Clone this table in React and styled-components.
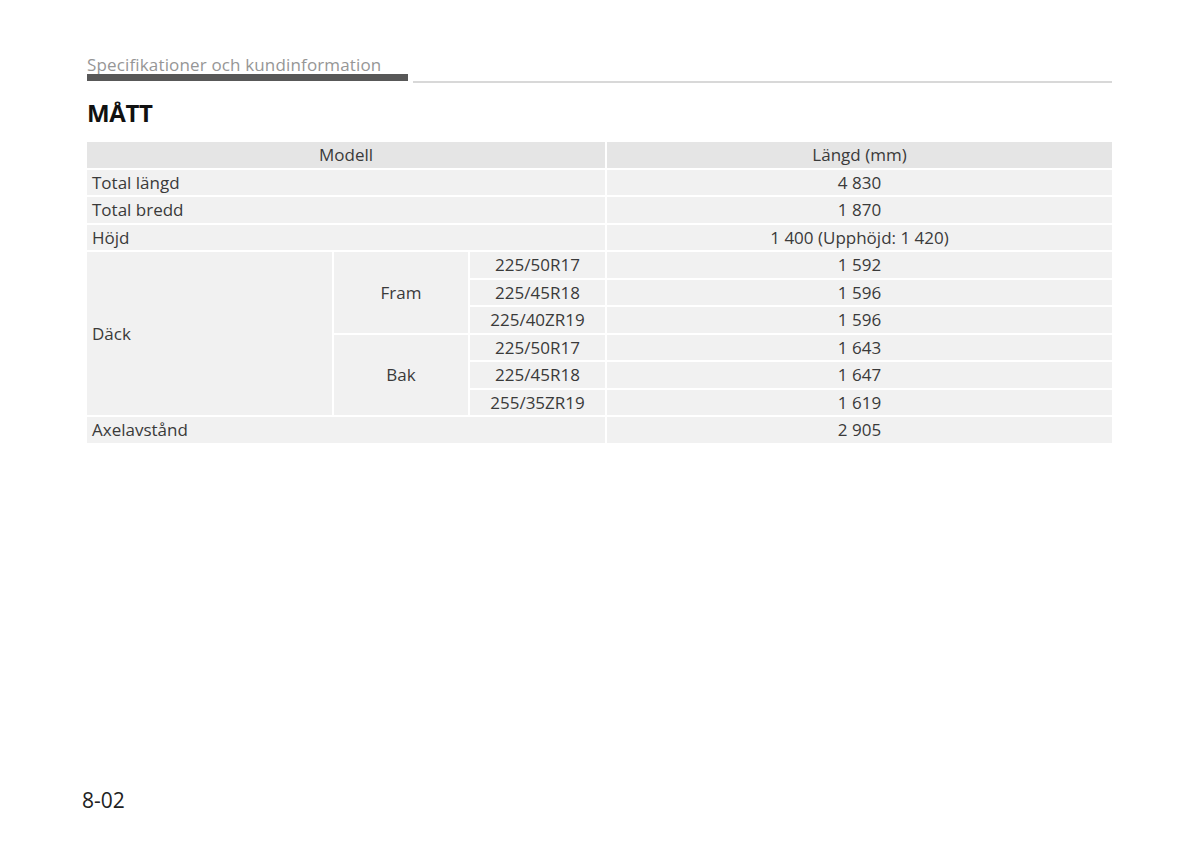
import React from "react";
import styled, { createGlobalStyle } from "styled-components";

const GlobalStyle = createGlobalStyle`
    html, body {
        margin: 0;
        padding: 0;
        background: #ffffff;
    }
    body {
        font-family: "Open Sans", "Noto Sans", sans-serif;
        color: #333333;
    }
`

const rows = [
    { label: "Total längd", value: "4 830" },
    { label: "Total bredd", value: "1 870" },
    { label: "Höjd", value: "1 400 (Upphöjd: 1 420)" },
]

const tyres = [
    { side: "Fram", sizes: [["225/50R17", "1 592"], ["225/45R18", "1 596"], ["225/40ZR19", "1 596"]] },
    { side: "Bak", sizes: [["225/50R17", "1 643"], ["225/45R18", "1 647"], ["255/35ZR19", "1 619"]] },
]

export default function App() {
    return (
        <>
            <GlobalStyle />
            <StyledPage>
                <StyledRunningHead>
                    <StyledHeadLabel>
                        <StyledHeadText>Specifikationer och kundinformation</StyledHeadText>
                        <StyledHeadBar />
                    </StyledHeadLabel>
                    <StyledHeadRule />
                </StyledRunningHead>

                <StyledTitle>MÅTT</StyledTitle>

                <StyledTable>
                    <StyledCell $head $span={3} $align="center">Modell</StyledCell>
                    <StyledCell $head $align="center">Längd (mm)</StyledCell>

                    {rows.map((row) => (
                        <React.Fragment key={row.label}>
                            <StyledCell $span={3}>{row.label}</StyledCell>
                            <StyledCell $align="center">{row.value}</StyledCell>
                        </React.Fragment>
                    ))}

                    <StyledCell $rows={6}>Däck</StyledCell>
                    {tyres.map((group) =>
                        group.sizes.map(([size, value], i) => (
                            <React.Fragment key={group.side + size}>
                                {i === 0 && (
                                    <StyledCell $rows={3} $align="center">{group.side}</StyledCell>
                                )}
                                <StyledCell $align="center">{size}</StyledCell>
                                <StyledCell $align="center">{value}</StyledCell>
                            </React.Fragment>
                        ))
                    )}

                    <StyledCell $span={3}>Axelavstånd</StyledCell>
                    <StyledCell $align="center">2 905</StyledCell>
                </StyledTable>

                <StyledPageNumber>8-02</StyledPageNumber>
            </StyledPage>
        </>
    )
}

const StyledPage = styled.div`
    box-sizing: border-box;
    display: flex;
    flex-direction: column;
    min-height: 861px;
    padding: 55px 88px 48px 87px;
`
const StyledRunningHead = styled.div`
    display: flex;
    align-items: flex-end;
`
const StyledHeadLabel = styled.div`
    display: flex;
    flex-direction: column;
    width: 321px;
`
const StyledHeadText = styled.span`
    color: #969696;
    font-size: 17px;
    line-height: 20px;
    letter-spacing: 0.15px;
    white-space: nowrap;
    margin-bottom: -1px;
`
const StyledHeadBar = styled.div`
    background: #585858;
    height: 7px;
`
const StyledHeadRule = styled.div`
    flex: 1;
    height: 2px;
    margin-left: 5px;
    margin-bottom: -2px;
    background: #d8d8d8;
`
const StyledTitle = styled.h1`
    color: #111111;
    font-size: 24px;
    font-weight: 700;
    line-height: 28px;
    margin: 18px 0 15px 0;
    letter-spacing: -0.4px;
`
const StyledTable = styled.div`
    display: grid;
    grid-template-columns: 245px 134px 135px 1fr;
    grid-auto-rows: 25.5px;
    gap: 2px;
    font-size: 17px;
    color: #3a3a3a;
`
const StyledCell = styled.div`
    display: flex;
    align-items: center;
    justify-content: ${({ $align }) => ($align === "center" ? "center" : "flex-start")};
    padding-left: ${({ $align }) => ($align === "center" ? "0" : "5px")};
    background: ${({ $head }) => ($head ? "#e5e5e5" : "#f1f1f1")};
    grid-column: ${({ $span }) => ($span ? `span ${$span}` : "auto")};
    grid-row: ${({ $rows }) => ($rows ? `span ${$rows}` : "auto")};
    white-space: nowrap;
`
const StyledPageNumber = styled.div`
    margin-top: auto;
    margin-left: -5px;
    font-size: 21px;
    line-height: 26px;
    color: #222222;
`
